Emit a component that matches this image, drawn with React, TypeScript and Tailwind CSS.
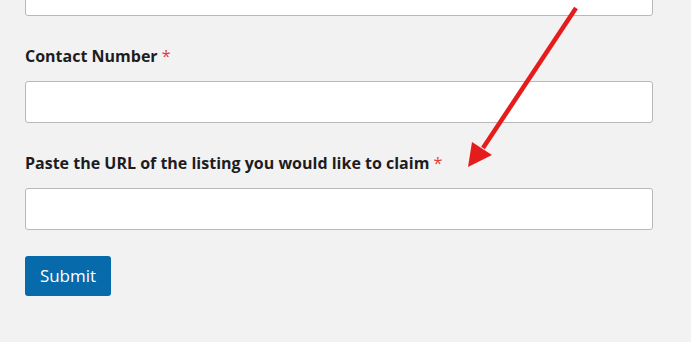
export default function App() {
  const fields = ["", "Contact Number", "Paste the URL of the listing you would like to claim"];
  return (
    <div className="relative h-[342px] w-[691px] overflow-hidden bg-[#f2f2f2]">
      <form className="-mt-[26px] flex flex-col px-[25px] pr-[38px]">
        {fields.map((label, i) => (
          <div key={i} className={i === 0 ? "" : "mt-[30px]"}>
            {label && (
              <label className="mb-[15px] block h-5 font-['Open_Sans',sans-serif] text-[16px] leading-5 font-bold text-[#1d1d1f]">
                {label} <span className="text-[16px] font-normal text-[#e03a3a]">*</span>
              </label>
            )}
            <input
              type="text"
              className="block h-[42px] w-full rounded-[3px] border border-[#b8b8b8] bg-white"
            />
          </div>
        ))}
        <div className="mt-[26px]">
          <button
            type="button"
            className="h-10 w-[86px] rounded-[3px] bg-[#066aab] font-['Open_Sans',sans-serif] text-[17px] text-white"
          >
            Submit
          </button>
        </div>
      </form>
      <svg className="pointer-events-none absolute inset-0" width="691" height="342" viewBox="0 0 691 342">
        <line x1="576" y1="8" x2="483" y2="148" stroke="#e51c1c" strokeWidth="4.5" />
        <polygon points="468,167 472,142 492,155" fill="#e51c1c" />
      </svg>
    </div>
  );
}
